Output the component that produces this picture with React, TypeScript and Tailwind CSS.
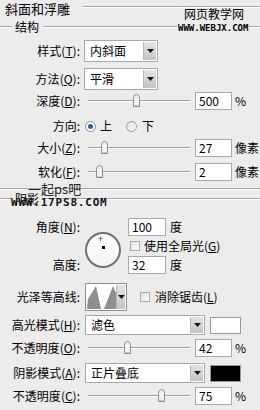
import React from "react";

const K = ({ k }: { k: string }) => (
  <>
    (<span className="underline underline-offset-1">{k}</span>):
  </>
);

const Label = ({ children }: { children: React.ReactNode }) => (
  <div className="w-[80px] shrink-0 text-right whitespace-nowrap leading-none">{children}</div>
);

const Etched = ({ className }: { className: string }) => (
  <div className={className}>
    <div className="h-px bg-[#a8a8a8]" />
    <div className="h-px bg-white" />
  </div>
);

const Arrow = () => (
  <svg width="7" height="4" viewBox="0 0 7 4">
    <path d="M0 0 L7 0 L3.5 4 Z" fill="#111" />
  </svg>
);

const DropBtn = () => (
  <div className="w-[13px] h-full bg-gradient-to-b from-[#e4e4e4] to-[#c4c4c4] border-l border-[#b8b8b8] flex items-center justify-center">
    <Arrow />
  </div>
);

const Select = ({ text, wide }: { text: string; wide?: boolean }) => (
  <div
    className={
      wide
        ? "ml-[5px] w-[120px] h-full bg-white border border-[#a9a9a9] flex items-stretch p-px"
        : "ml-[4px] w-[74px] h-full bg-white border border-[#a9a9a9] flex items-stretch p-px"
    }
  >
    <div className="flex-1 flex items-center pl-[4px] leading-none">{text}</div>
    <DropBtn />
  </div>
);

const Thumb = () => (
  <svg width="9" height="13" viewBox="0 0 9 13">
    <path
      d="M1.5 4.5 Q1.5 0.5 4.5 0.5 Q7.5 0.5 7.5 4.5 L7.5 12.5 L1.5 12.5 Z"
      fill="#f2f2f2"
      stroke="#8c8c8c"
    />
    <path d="M2.5 11.5 L6.5 11.5" stroke="#c8c8c8" />
  </svg>
);

const Slider = ({ pos }: { pos: number }) => (
  <div className="relative ml-[8px] w-[102px] h-full flex items-center">
    <div className="w-full">
      <div className="h-px bg-[#a0a0a0]" />
      <div className="h-px bg-white" />
    </div>
    <div className="absolute top-[2px]" style={{ left: pos - 4 }}>
      <Thumb />
    </div>
  </div>
);

const Input = ({ v, className }: { v: string; className: string }) => (
  <div className={className}>
    <span className="leading-none">{v}</span>
  </div>
);

const SliderRow = ({
  label,
  pos,
  v,
  unit,
  className,
}: {
  label: React.ReactNode;
  pos: number;
  v: string;
  unit: string;
  className: string;
}) => (
  <div className={className}>
    <Label>{label}</Label>
    <Slider pos={pos} />
    <Input
      v={v}
      className="ml-[5px] w-[37px] h-full bg-white border border-[#a9a9a9] flex items-center pl-[3px]"
    />
    <div className="ml-[3px] leading-none">{unit}</div>
  </div>
);

const Check = () => (
  <div className="w-[10px] h-[10px] border border-[#a9a9a9] bg-gradient-to-br from-[#e2e2e2] to-white" />
);

export default function App() {
  return (
    <div className="w-[260px] h-[410px] bg-[#ececec] relative overflow-hidden text-[12px] text-black font-['Noto_Sans_CJK_SC',sans-serif]">
      {/* header */}
      <div className="flex items-center h-[16px]">
        <div className="pl-[5px] text-[13px] leading-none">斜面和浮雕</div>
        <Etched className="flex-1 ml-[13px] -mt-[2px]" />
      </div>
      <div className="flex items-center h-[18px] mt-[2px]">
        <Etched className="w-[12px]" />
        <div className="pl-[3px] pr-[4px] text-[12px] leading-none">结构</div>
        <Etched className="flex-1" />
      </div>

      <div className="flex items-center h-[22px] mt-[4px]">
        <Label>
          样式<K k="T" />
        </Label>
        <Select text="内斜面" />
      </div>
      <div className="flex items-center h-[22px] mt-[6px]">
        <Label>
          方法<K k="Q" />
        </Label>
        <Select text="平滑" />
      </div>

      <SliderRow
        className="flex items-center h-[18px] mt-[2px]"
        label={
          <>
            深度<K k="D" />
          </>
        }
        pos={48}
        v="500"
        unit="%"
      />

      <div className="flex items-center h-[18px] mt-[7px]">
        <Label>方向:</Label>
        <div className="ml-[5px] w-[11px] h-[11px] rounded-full border border-[#8a8a8a] bg-white flex items-center justify-center">
          <div className="w-[5px] h-[5px] rounded-full bg-[#2d5fa8]" />
        </div>
        <div className="ml-[4px] leading-none">上</div>
        <div className="ml-[14px] w-[11px] h-[11px] rounded-full border border-[#9a9a9a] bg-gradient-to-br from-[#e0e0e0] to-white" />
        <div className="ml-[5px] leading-none">下</div>
      </div>

      <SliderRow
        className="flex items-center h-[18px] mt-[4px]"
        label={
          <>
            大小<K k="Z" />
          </>
        }
        pos={16}
        v="27"
        unit="像素"
      />
      <SliderRow
        className="flex items-center h-[18px] mt-[6px]"
        label={
          <>
            软化<K k="F" />
          </>
        }
        pos={11}
        v="2"
        unit="像素"
      />

      <Etched className="mt-[7px]" />
      <div className="flex items-center h-[18px]">
        <Etched className="w-[12px]" />
        <div className="pl-[3px] pr-[4px] leading-none">阴影</div>
        <Etched className="flex-1" />
      </div>

      {/* angle block */}
      <div className="flex mt-[10px] h-[56px]">
        <div className="w-[80px] shrink-0 flex flex-col justify-between">
          <div className="h-[18px] flex items-center justify-end">
            <span className="leading-none">
              角度<K k="N" />
            </span>
          </div>
          <div className="h-[18px] flex items-center justify-end">
            <span className="leading-none">高度:</span>
          </div>
        </div>
        <div className="ml-[5px] mt-[14px]">
          <div className="relative w-[36px] h-[36px] rounded-full border-2 border-[#6d6f7c] bg-gradient-to-b from-white to-[#f4f4f4]">
            <div className="absolute left-[11px] top-[0px] text-[9px] leading-none text-[#333]">+</div>
            <div className="absolute left-[15px] top-[12px] w-[3px] h-[3px] bg-black" />
          </div>
        </div>
        <div className="ml-[7px] flex flex-col">
          <div className="flex items-center h-[18px]">
            <Input
              v="100"
              className="w-[38px] h-full bg-white border border-[#a9a9a9] flex items-center pl-[3px]"
            />
            <div className="ml-[4px] leading-none">度</div>
          </div>
          <div className="flex items-center h-[12px] mt-[4px] ml-[2px]">
            <Check />
            <div className="ml-[4px] leading-none">
              使用全局光(<span className="underline underline-offset-1">G</span>)
            </div>
          </div>
          <div className="flex items-center h-[18px] mt-[4px]">
            <Input
              v="32"
              className="w-[38px] h-full bg-white border border-[#a9a9a9] flex items-center pl-[3px]"
            />
            <div className="ml-[4px] leading-none">度</div>
          </div>
        </div>
      </div>

      {/* contour */}
      <div className="flex items-center h-[28px] mt-[9px]">
        <Label>光泽等高线:</Label>
        <div className="ml-[5px] w-[42px] h-full bg-white border border-[#8f8f8f] flex items-stretch p-px">
          <div className="flex-1 bg-white">
            <svg width="29" height="24" viewBox="0 0 29 24" className="block">
              <path d="M0 24 L1 14 L9 1 L14 24 Z" fill="#8e8e8e" />
              <path d="M17 24 L26 1 L29 8 L29 24 Z" fill="#8e8e8e" />
            </svg>
          </div>
          <DropBtn />
        </div>
        <div className="ml-[13px] flex items-center">
          <Check />
          <div className="ml-[5px] leading-none">
            消除锯齿(<span className="underline underline-offset-1">L</span>)
          </div>
        </div>
      </div>

      <div className="flex items-center h-[20px] mt-[4px]">
        <Label>
          高光模式<K k="H" />
        </Label>
        <Select text="滤色" wide />
        <div className="ml-[5px] w-[31px] h-[17px] bg-white border border-[#9a9a9a]" />
      </div>

      <SliderRow
        className="flex items-center h-[18px] mt-[4px]"
        label={
          <>
            不透明度<K k="O" />
          </>
        }
        pos={39}
        v="42"
        unit="%"
      />

      <div className="flex items-center h-[20px] mt-[6px]">
        <Label>
          阴影模式<K k="A" />
        </Label>
        <Select text="正片叠底" wide />
        <div className="ml-[5px] w-[31px] h-[17px] bg-black border border-[#9a9a9a]" />
      </div>

      <SliderRow
        className="flex items-center h-[18px] mt-[4px]"
        label={
          <>
            不透明度<K k="C" />
          </>
        }
        pos={73}
        v="75"
        unit="%"
      />

      {/* watermarks */}
      <div className="absolute left-[183px] top-[8px] text-[12px] leading-none tracking-[0px] bg-[#ececec] px-px">
        网页教学网
      </div>
      <div className="absolute left-[177px] top-[23px] text-[9px] leading-[10px] font-bold font-['DejaVu_Sans_Mono',monospace] bg-[#ececec] px-px">
        WWW.WEBJX.COM
      </div>
      <div className="absolute left-[28px] top-[182px] text-[13px] leading-none text-[#222]">一起ps吧</div>
      <div className="absolute left-[11px] top-[198px] text-[11px] leading-[10px] font-bold tracking-[0.8px] font-['DejaVu_Sans_Mono',monospace] text-[#111]">
        WWW.17PS8.COM
      </div>
    </div>
  );
}
